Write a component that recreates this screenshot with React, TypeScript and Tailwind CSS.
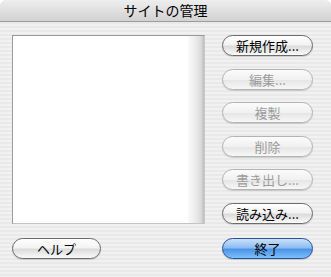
const jp = { fontFamily: '"Lucida Grande", "Noto Sans CJK JP", "Liberation Sans", sans-serif' }

function AquaButton({ label, disabled, primary, className = '' }: { label: string; disabled?: boolean; primary?: boolean; className?: string }) {
    const base = 'h-[21px] rounded-full flex items-center justify-center text-[13px] leading-none border shadow-[0_1px_1px_rgba(0,0,0,0.15)]'
    const skin = primary
        ? 'border-[#2a4f95] text-black bg-[linear-gradient(to_bottom,#c9e1fb_0%,#8fbdf1_45%,#4d94e8_55%,#7cc0fb_100%)]'
        : disabled
            ? 'border-[#b4b4b4] text-[#9c9c9c] bg-[linear-gradient(to_bottom,#fbfbfb_0%,#f1f1f1_50%,#e6e6e6_55%,#f7f7f7_100%)]'
            : 'border-[#6b6b6b] text-black bg-[linear-gradient(to_bottom,#ffffff_0%,#f3f3f3_45%,#dcdcdc_55%,#fafafa_100%)]'
    return (
        <div className={`${base} ${skin} ${className}`} style={jp}>
            {label}
        </div>
    )
}

export default function App() {
    return (
        <div className="w-[331px] h-[277px] bg-white">
            <div className="w-[331px] h-[277px] rounded-t-[6px] overflow-hidden flex flex-col bg-[repeating-linear-gradient(to_bottom,#f1f1f1_0px,#f1f1f1_2px,#e9e9e9_2px,#e9e9e9_4px)]">
                <div className="h-[22px] shrink-0 flex items-center justify-center border-b border-[#9b9b9b] bg-[linear-gradient(to_bottom,#eeeeee,#d2d2d2)] text-[14px] text-black" style={jp}>
                    サイトの管理
                </div>

                <div className="flex pl-[12px] pt-[13px]">
                    <div className="w-[193px] h-[189px] flex border border-[#9a9a9a] border-r-[#c8c8c8] border-b-[#c4c4c4]">
                        <div className="flex-1 bg-white" />
                        <div className="w-[16px] bg-[linear-gradient(to_right,#fafafa_0%,#eeeeee_40%,#dcdcdc_80%,#bdbdbd_100%)]" />
                    </div>
                    <div className="ml-[17px] w-[91px] h-[189px] flex flex-col justify-between">
                        <AquaButton label="新規作成..." />
                        <AquaButton label="編集..." disabled />
                        <AquaButton label="複製" disabled />
                        <AquaButton label="削除" disabled />
                        <AquaButton label="書き出し..." disabled />
                        <AquaButton label="読み込み..." />
                    </div>
                </div>

                <div className="flex justify-between pl-[12px] pr-[18px] mt-[14px]">
                    <AquaButton label="ヘルプ" className="w-[89px]" />
                    <AquaButton label="終了" primary className="w-[91px]" />
                </div>
            </div>
        </div>
    )
}
